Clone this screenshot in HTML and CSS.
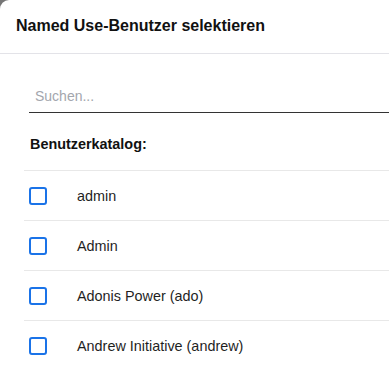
FILE: index.html
```html
<!DOCTYPE html>
<html lang="de">
<head>
    <meta charset="UTF-8">
    <meta name="viewport" content="width=device-width, initial-scale=1.0">
    <title>Named Use-Benutzer selektieren</title>
    <link rel="stylesheet" href="styles.css">
</head>
<body>
    <div class="modal">
        <header class="modal-header">
            <h1>Named Use-Benutzer selektieren</h1>
        </header>

        <div class="modal-body">
            <div class="search">
                <input type="text" placeholder="Suchen...">
            </div>

            <h2 class="catalog-title">Benutzerkatalog:</h2>

            <ul class="user-list">
                <li><span class="checkbox"></span><span class="name">admin</span></li>
                <li><span class="checkbox"></span><span class="name">Admin</span></li>
                <li><span class="checkbox"></span><span class="name">Adonis Power (ado)</span></li>
                <li><span class="checkbox"></span><span class="name">Andrew Initiative (andrew)</span></li>
            </ul>
        </div>
    </div>
</body>
</html>
```

FILE: styles.css
```css
* {
    margin: 0;
    padding: 0;
    box-sizing: border-box;
    font-family: 'Liberation Sans', Arial, sans-serif;
}

body {
    background-color: #767676;
    overflow: hidden;
    height: 370px;
}

/* Modal */
.modal {
    width: 100%;
    height: 100%;
    background-color: white;
    border-top-left-radius: 9px;
    color: #1f1f1f;
}

.modal-header {
    height: 54px;
    padding: 0 16px;
    display: flex;
    align-items: center;
    border-bottom: 1px solid #e3e3e8;
}

.modal-header h1 {
    font-size: 16px;
    font-weight: 700;
    color: #111;
    padding-bottom: 1px;
}

.modal-body {
    padding: 30px 0 0 24px;
}

/* Search */
.search {
    padding-left: 5px;
}

.search input {
    width: 100%;
    height: 29px;
    border: none;
    border-bottom: 1px solid #333;
    outline: none;
    font-size: 14px;
    padding: 0 6px 4px;
    color: #333;
}

.search input::placeholder {
    color: #a3a6ad;
}

/* Catalog */
.catalog-title {
    font-size: 14.4px;
    font-weight: 700;
    color: #111;
    padding: 23px 0 0 6px;
    height: 57px;
}

.user-list {
    list-style: none;
}

.user-list li {
    height: 50px;
    display: flex;
    align-items: center;
    border-top: 1px solid #e8e8e8;
    padding-left: 5px;
}

.checkbox {
    width: 18px;
    height: 18px;
    border: 2px solid #1a73e8;
    border-radius: 3px;
    flex-shrink: 0;
}

.name {
    font-size: 14.4px;
    margin-left: 30px;
    color: #1f1f1f;
}
```
